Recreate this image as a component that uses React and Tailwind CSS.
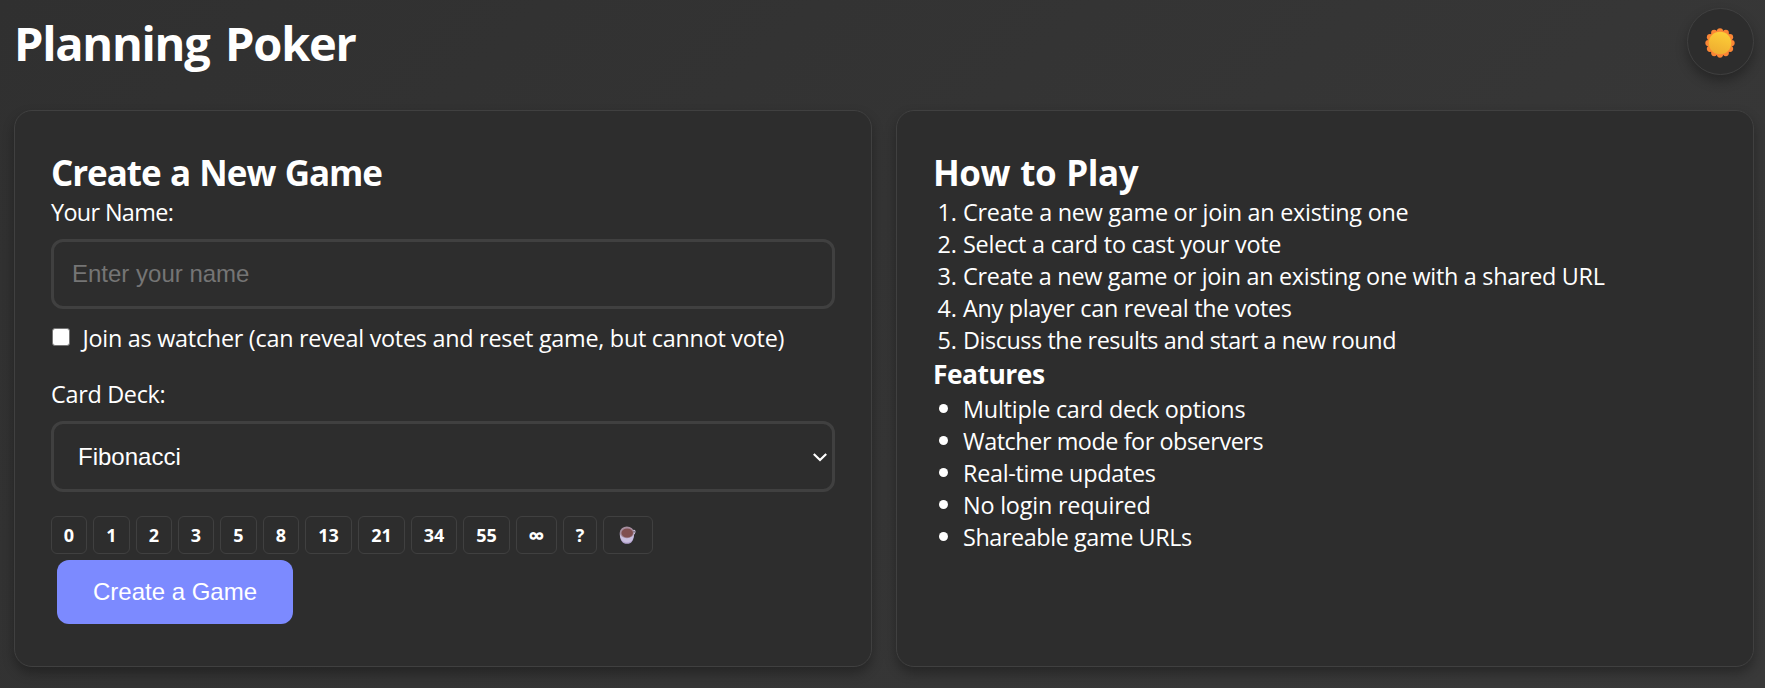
const deck = [
  ["0", "w-[36px]"], ["1", "w-[37px]"], ["2", "w-[36px]"], ["3", "w-[36px]"], ["5", "w-[37px]"], ["8", "w-[36px]"],
  ["13", "w-[47px]"], ["21", "w-[47px]"], ["34", "w-[46px]"], ["55", "w-[47px]"], ["∞", "w-[41px] text-[23px]"], ["?", "w-[34px]"],
];

const steps = [
  ["Create a new game or join an existing one", "tracking-[-0.26px]"],
  ["Select a card to cast your vote", "tracking-[-0.22px]"],
  ["Create a new game or join an existing one with a shared URL", "tracking-[-0.3px]"],
  ["Any player can reveal the votes", "tracking-[-0.3px]"],
  ["Discuss the results and start a new round", "tracking-[-0.44px]"],
];

const features = [
  ["Multiple card deck options", "tracking-[-0.23px]"],
  ["Watcher mode for observers", "tracking-[-0.45px]"],
  ["Real-time updates", "tracking-[-0.3px]"],
  ["No login required", "tracking-[-0.2px]"],
  ["Shareable game URLs", "tracking-[-0.42px]"],
];

const petals = Array.from({ length: 12 }, (_, i) => {
  const a = (i * Math.PI) / 6;
  return [15 + 11.6 * Math.sin(a), 15 - 11.6 * Math.cos(a)];
});

function Sun() {
  return (
    <svg width="30" height="30" viewBox="0 0 30 30" className="mt-[2px] mr-[1px]">
      <defs>
        <linearGradient id="disc" x1="0.7" y1="0" x2="0.35" y2="1">
          <stop offset="0" stopColor="#fdcf38" />
          <stop offset="1" stopColor="#eeac30" />
        </linearGradient>
      </defs>
      <g fill="#fb8635">
        <circle cx="15" cy="15" r="12.4" />
        {petals.map(([x, y], i) => <circle key={i} cx={x} cy={y} r="3.1" />)}
      </g>
      <circle cx="15" cy="15" r="11.3" fill="url(#disc)" />
    </svg>
  );
}

function Cup() {
  return (
    <svg width="18" height="20" viewBox="0 0 18 20" className="shrink-0">
      <path d="M13.4 5.8 Q16.3 4.6 16 7 Q15.6 9.6 13.4 10.6" fill="none" stroke="#cdbfdc" strokeWidth="1.1" />
      <path d="M0.8 8.4 C0.8 15.5 3.6 18.8 8 18.8 C12.4 18.8 15 15.5 15 8.4 Z" fill="#b3a2cf" />
      <path d="M0.8 8 C0.8 14.6 3.6 17.4 8 17.4 C12.4 17.4 15 14.6 15 8 Z" fill="#cabfdf" />
      <ellipse cx="7.9" cy="7.4" rx="7.1" ry="5.9" fill="#a68e9f" />
      <ellipse cx="8.2" cy="8" rx="5.8" ry="4.6" fill="#804f50" />
    </svg>
  );
}

const card = "flex-1 h-[557px] rounded-[18px] border border-[#404040] bg-[#2d2d2d] p-9 shadow-[0_6px_12px_rgba(0,0,0,0.3)]";
const h2 = "h-12 whitespace-nowrap pt-[2px] text-[35px] leading-[48px] font-bold";
const body = "h-8 whitespace-nowrap pt-px text-[23.4px] leading-8";

export default function App() {
  return (
    <div className="h-[688px] overflow-hidden bg-linear-135 from-[#303030] to-[#393939] pt-2 pr-[11px] pl-[14px] font-['Open_Sans','Noto_Sans',sans-serif] text-white">
      <header className="flex h-[102px] items-start justify-between">
        <h1 className="mt-[3px] whitespace-nowrap text-[47px] leading-[64px] font-bold tracking-[-1.3px] [word-spacing:4.8px]">Planning Poker</h1>
        <button className="flex h-[67px] w-[67px] items-center justify-center rounded-full border border-[#404040] bg-[#2d2d2d] shadow-[0_6px_12px_rgba(0,0,0,0.3)]">
          <Sun />
        </button>
      </header>

      <main className="flex gap-6">
        <section className={card}>
          <h2 className={h2}><span className="tracking-[-1.05px] [word-spacing:1.3px]">Create a New Game</span></h2>
          <label className={`block tracking-[-0.65px] ${body}`}>Your Name:</label>
          <input
            placeholder="Enter your name"
            className="mt-3 block h-[70px] w-full rounded-xl border-[3px] border-[#404040] bg-[#2d2d2d] px-[18px] font-['Liberation_Sans',sans-serif] text-2xl placeholder:text-[#757575]"
          />
          <label className="mt-3 flex h-8">
            <input type="checkbox" className="mt-[7px] ml-px h-[18px] w-[18px] shrink-0 appearance-none rounded-[3px] border-[1.5px] border-[#767676] bg-white" />
            <span className={`ml-[12.5px] tracking-[-0.27px] ${body}`}>Join as watcher (can reveal votes and reset game, but cannot vote)</span>
          </label>
          <label className={`mt-6 block tracking-[-0.3px] ${body}`}>Card Deck:</label>
          <div className="mt-3 flex h-[71px] items-center justify-between rounded-xl border-[3px] border-[#404040] pr-[4px] pl-6 font-['Liberation_Sans',sans-serif] text-2xl">
            <span>Fibonacci</span>
            <svg width="16" height="10" viewBox="0 0 16 10" fill="none" stroke="white" strokeWidth="2.2">
              <path d="M1.8 2 L8 8 L14.2 2" />
            </svg>
          </div>
          <div className="mt-6 flex h-[38px] gap-1.5 text-[18px]">
            {deck.map(([v, w]) => (
              <div key={v} className={`flex items-center justify-center rounded-[6px] border border-[#404040] font-bold ${w}`}>{v}</div>
            ))}
            <div className="flex w-[50px] items-center justify-center rounded-[6px] border border-[#404040]"><Cup /></div>
          </div>
          <button className="mt-1.5 ml-1.5 block h-16 w-[236px] rounded-xl bg-[#7c8aff] font-['Liberation_Sans',sans-serif] text-2xl">Create a Game</button>
        </section>

        <section className={card}>
          <h2 className={h2}><span className="tracking-[-0.5px] [word-spacing:1.7px]">How to Play</span></h2>
          <ol>
            {steps.map(([s, t], i) => (
              <li key={s} className={`flex ${body}`}>
                <span className="w-[30px] shrink-0 pr-[6px] text-right">{i + 1}.</span>
                <span className={t}>{s}</span>
              </li>
            ))}
          </ol>
          <h3 className="h-9 pt-px text-[26.4px] leading-9 font-bold tracking-[-0.5px]">Features</h3>
          <ul className="pt-px">
            {features.map(([s, t]) => (
              <li key={s} className={`flex items-center ${body}`}>
                <span className="mr-[15px] ml-[6px] h-[9px] w-[9px] shrink-0 rounded-full bg-white" />
                <span className={t}>{s}</span>
              </li>
            ))}
          </ul>
        </section>
      </main>
    </div>
  );
}
